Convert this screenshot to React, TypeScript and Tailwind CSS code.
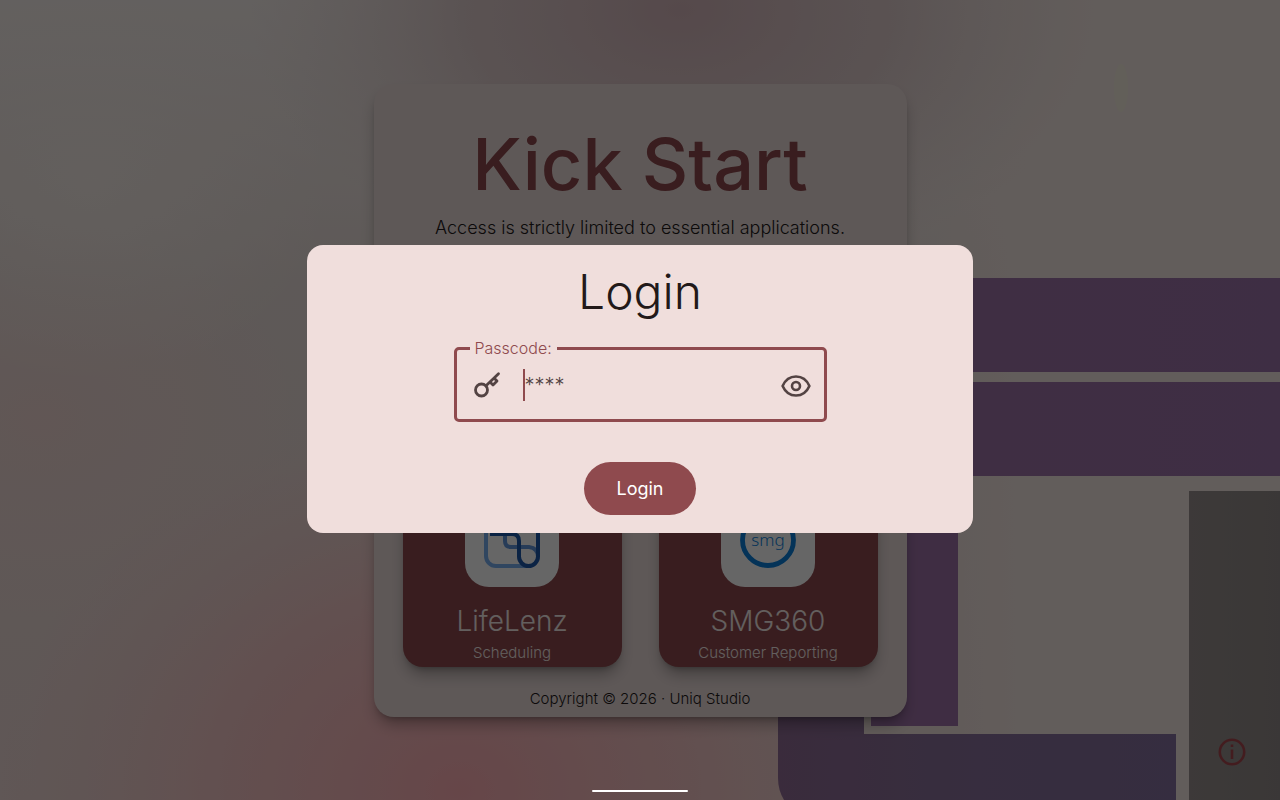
import { ReactNode } from "react";

type AppTileProps = {
    name: string
    description: string
    children: ReactNode
}

function Wallpaper() {
    return (
        <svg
            className="absolute inset-0 h-full w-full"
            viewBox="0 0 1280 800"
            preserveAspectRatio="xMidYMid slice"
            aria-hidden="true"
        >
            <defs>
                <linearGradient id="base" x1="0" y1="0" x2="0" y2="1">
                    <stop offset="0" stopColor="#f8f0ed" />
                    <stop offset="0.35" stopColor="#ebdfdb" />
                    <stop offset="1" stopColor="#efd9d6" />
                </linearGradient>
                <radialGradient id="rose">
                    <stop offset="0" stopColor="#ffafb5" />
                    <stop offset="0.5" stopColor="#fabbbd" stopOpacity="0.65" />
                    <stop offset="1" stopColor="#f6c9c7" stopOpacity="0" />
                </radialGradient>
                <radialGradient id="mauve">
                    <stop offset="0" stopColor="#d5b6bb" />
                    <stop offset="0.5" stopColor="#dac4c5" stopOpacity="0.75" />
                    <stop offset="1" stopColor="#e6d8d6" stopOpacity="0" />
                </radialGradient>
                <radialGradient id="blush">
                    <stop offset="0" stopColor="#f5d6d2" stopOpacity="0.7" />
                    <stop offset="1" stopColor="#f5d6d2" stopOpacity="0" />
                </radialGradient>
                <radialGradient id="cream">
                    <stop offset="0" stopColor="#fbf2ec" stopOpacity="0.7" />
                    <stop offset="1" stopColor="#fbf2ec" stopOpacity="0" />
                </radialGradient>
                <linearGradient id="right" x1="0" y1="0" x2="1" y2="0">
                    <stop offset="0" stopColor="#f6e9e4" stopOpacity="0" />
                    <stop offset="0.4" stopColor="#f6e9e4" />
                </linearGradient>
                <linearGradient id="band" x1="0" y1="0" x2="1" y2="0">
                    <stop offset="0" stopColor="#a073a8" />
                    <stop offset="1" stopColor="#9c74aa" />
                </linearGradient>
                <linearGradient id="foot" x1="0" y1="0" x2="1" y2="0">
                    <stop offset="0" stopColor="#916d96" />
                    <stop offset="0.5" stopColor="#89729d" />
                    <stop offset="1" stopColor="#8672a0" />
                </linearGradient>
                <linearGradient id="slate" x1="0" y1="0" x2="1" y2="0">
                    <stop offset="0" stopColor="#98908e" />
                    <stop offset="1" stopColor="#928b8a" />
                </linearGradient>
            </defs>
            <rect width="1280" height="800" fill="url(#base)" />
            <rect x="860" width="420" height="800" fill="url(#right)" />
            <ellipse cx="40" cy="420" rx="260" ry="200" fill="url(#blush)" />
            <ellipse cx="90" cy="180" rx="240" ry="200" fill="url(#cream)" />
            <ellipse cx="460" cy="790" rx="460" ry="380" fill="url(#rose)" />
            <ellipse cx="680" cy="10" rx="430" ry="270" fill="url(#mauve)" />
            <ellipse cx="1121" cy="88" rx="7" ry="24" fill="#f3f3d8" opacity="0.5" />
            <rect x="700" y="278" width="580" height="94" fill="url(#band)" />
            <rect x="700" y="382" width="580" height="94" fill="url(#band)" />
            <path d="M778 560h86v174h312v66H784q-6-10-6-22z" fill="url(#foot)" />
            <path d="M864 560h100v174H864z" fill="#f3e4df" />
            <rect x="871" y="476" width="87" height="250" fill="#9f72a8" />
            <rect x="1189" y="491" width="91" height="309" fill="url(#slate)" />
        </svg>
    );
}

function AppTile({ name, description, children }: AppTileProps) {
    return (
        <button className="flex flex-col items-center rounded-[20px] bg-[#8f4a4e] pt-[18px] pb-1 text-[#f7eeec] shadow-lg shadow-black/30">
            <span className="h-[94px] w-[94px] rounded-3xl bg-white p-[19px]">{children}</span>
            <span className="mt-3 text-[28px] leading-11 font-light">{name}</span>
            <span className="text-[15px] leading-5 font-light">{description}</span>
        </button>
    );
}

function LifeLenzLogo() {
    return (
        <svg className="h-14 w-14" viewBox="0 0 56 56" fill="none" strokeWidth="4" aria-hidden="true">
            <path d="M44 54H12A10 10 0 0 1 2 44V12A10 10 0 0 1 12 2h14" stroke="#78aef0" />
            <path d="M21 2v27q0 6 6 6h18q9 1 9 10" stroke="#6297dc" />
            <path d="M6 22h22q7 0 7 7v15.500a9.500 9.500 0 0 0 19 0V2" stroke="#1c57aa" />
        </svg>
    );
}

function SmgLogo() {
    return (
        <svg className="h-14 w-14" viewBox="0 0 56 56" aria-hidden="true">
            <circle cx="28" cy="28" r="25.500" fill="none" stroke="#0a7fdc" strokeWidth="4.800" />
            <text x="28" y="34" textAnchor="middle" fontSize="17" fontWeight="300" fill="#0a7fdc" className="font-['Noto_Sans',sans-serif]">
                smg
            </text>
        </svg>
    );
}

function KeyIcon() {
    return (
        <svg className="h-8 w-8 shrink-0" viewBox="0 0 32 32" fill="none" stroke="#534343" strokeWidth="2.800" aria-hidden="true">
            <circle cx="12.500" cy="21" r="6" />
            <path d="M17 16.700 29.500 4.800" strokeLinecap="round" />
            <path d="m21.500 13.500 2.500 2.500 4-4-2.500-2.500" strokeLinejoin="round" />
        </svg>
    );
}

function EyeIcon() {
    return (
        <svg className="h-8 w-8" viewBox="0 0 32 32" fill="none" stroke="#534343" strokeWidth="2.600" aria-hidden="true">
            <path
                d="M2.600 17C5 11.500 10 7.500 16 7.500S27 11.500 29.400 17C27 22.500 22 26.500 16 26.500S5 22.500 2.600 17z"
                strokeLinejoin="round"
            />
            <circle cx="16" cy="17" r="4" />
        </svg>
    );
}

function LoginDialog() {
    return (
        <form
            role="dialog"
            aria-labelledby="login-title"
            onSubmit={(e) => e.preventDefault()}
            className="flex w-full max-w-[666px] flex-col items-center rounded-2xl bg-[#f0dedc] pt-4 pb-[18px]"
        >
            <h2 id="login-title" className="text-5xl leading-[62px] font-light text-[#221919]">Login</h2>
            <div className="relative mt-6 flex h-[75px] w-full max-w-[373px] items-center rounded-[5px] border-3 border-[#8f4a4e] px-3">
                <label htmlFor="passcode" className="absolute -top-3 left-[13px] bg-[#f0dedc] px-[5px] text-base leading-5 font-light text-[#8f4a4e]">
                    Passcode:
                </label>
                <KeyIcon />
                <span className="ml-[22px] h-8 w-[2px] shrink-0 bg-[#8f4a4e]"></span>
                <input
                    id="passcode"
                    type="password"
                    placeholder="****"
                    className="h-8 min-w-0 grow bg-transparent text-xl font-light text-[#534343] outline-none placeholder:text-[#534343]"
                />
                <button type="button" aria-label="Show passcode" className="shrink-0">
                    <EyeIcon />
                </button>
            </div>
            <button type="submit" className="mt-10 h-[53px] rounded-full bg-[#8f4a4e] px-8 text-lg text-white">
                Login
            </button>
        </form>
    );
}

export default function App() {
    return (
        <div className="relative flex min-h-screen items-center justify-center overflow-hidden font-[Inter,sans-serif]">
            <Wallpaper />
            <main className="relative flex w-full max-w-[533px] flex-col rounded-[20px] bg-[#ebdcda] px-[29px] pt-9 pb-2 text-center text-[#221919] shadow-lg shadow-black/30">
                <h1 className="text-[72px] leading-[88px] font-medium text-[#8f4a4e]">Kick Start</h1>
                <p className="mt-2 text-lg leading-6 font-light">Access is strictly limited to essential applications.</p>
                <div className="mt-[235px] grid grid-cols-2 gap-[37px]">
                    <AppTile name="LifeLenz" description="Scheduling">
                        <LifeLenzLogo />
                    </AppTile>
                    <AppTile name="SMG360" description="Customer Reporting">
                        <SmgLogo />
                    </AppTile>
                </div>
                <footer className="mt-[22px] text-[15px] leading-5 font-light">Copyright © 2026 · Uniq Studio</footer>
            </main>
            <button aria-label="About" className="absolute right-8 bottom-8">
                <svg className="h-8 w-8" viewBox="0 0 32 32" fill="none" stroke="#a8484e" strokeWidth="2.600">
                    <circle cx="16" cy="16" r="12.200" />
                    <path d="M16 13.500v9.500M16 8.500v2.600" />
                </svg>
            </button>
            <div className="absolute inset-0 flex items-center justify-center bg-black/60 pb-[22px]">
                <LoginDialog />
            </div>
            <div className="absolute bottom-2 left-1/2 h-[2px] w-24 -translate-x-1/2 rounded-full bg-white"></div>
        </div>
    );
}
